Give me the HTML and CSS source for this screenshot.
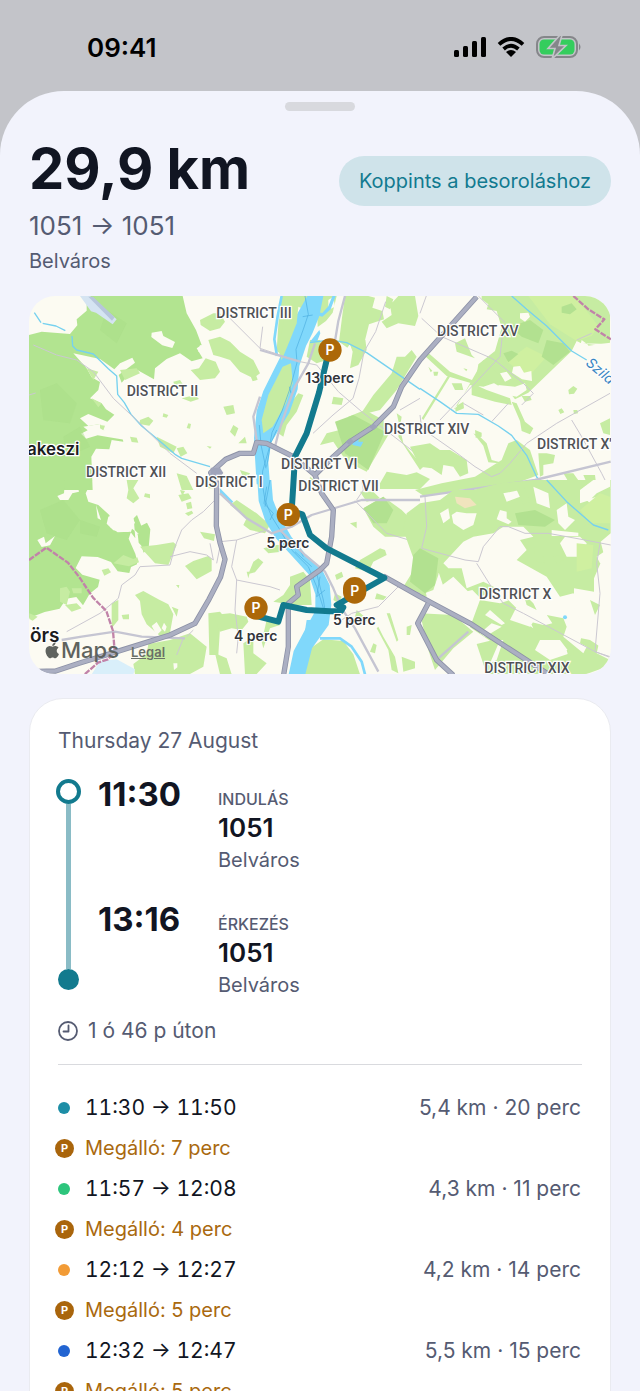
FILE: index.html
```html
<!DOCTYPE html>
<html lang="hu">
<head>
  <meta charset="UTF-8" />
  <meta name="viewport" content="width=device-width, initial-scale=1" />
  <title>29,9 km</title>
  <link rel="stylesheet" href="styles.css">
</head>
<body>

<div class="status-bar">
  <span class="clock">09:41</span>
  <div class="status-icons">
    <svg width="32" height="20" viewBox="0 0 32 20" aria-hidden="true">
      <rect x="0" y="13" width="5" height="7" rx="1.500" />
      <rect x="9" y="9" width="5" height="11" rx="1.500" />
      <rect x="18" y="4" width="5" height="16" rx="1.500" />
      <rect x="27" y="0" width="5" height="20" rx="1.500" />
    </svg>
    <svg width="28" height="20" viewBox="0 0 28 20" aria-hidden="true">
      <path d="M2 7.4Q14-3.6 26 7.4M6.6 12Q14 5.4 21.4 12" fill="none" stroke="#000" stroke-width="3.8" />
      <path d="M14 20l-5-5q5-4 10 0z" />
    </svg>
    <svg width="46" height="22" viewBox="0 0 46 22" aria-hidden="true">
      <rect x="1" y="1" width="40" height="20" rx="7" fill="none" stroke="#85868a" stroke-width="2" />
      <path d="M43 7.5q3 3.500 0 7z" fill="#85868a" />
      <rect x="3.500" y="3.500" width="35" height="15" rx="4.500" fill="#35cd5d" />
      <path d="M24-1L12 12.500h7L16 23 30 9.500h-7L26-1z" fill="#85868a" stroke="#c3c4c9" stroke-width="1.600" />
    </svg>
  </div>
</div>

<main class="sheet">
  <div class="grabber"></div>

  <header class="trip-header">
    <div>
      <h1>29,9 km</h1>
      <p class="route">1051 → 1051</p>
      <p class="area">Belváros</p>
    </div>
    <button class="classify" type="button">Koppints a besoroláshoz</button>
  </header>

  <div class="map">
    <svg class="map-art" viewBox="0 0 1746 1134" role="img" aria-label="Budapest">
      <!-- north west: Buda hills -->
      <g transform="translate(-27 -18)">
        <path class="forest" d="M200 18H488L500 70 528 120 545 165 530 175 548 205 515 214 480 190 440 207 405 235 402 268 352 240 330 250 305 278 296 255 345 218 337 203 300 220 283 238 240 207 160 190 200 235 215 262 240 276 235 300 210 325 245 340 258 358 283 374 262 395 205 372 180 385 205 408 240 402 255 425 305 432 310 455 275 450 268 478 228 476 214 500 218 600H27V135L65 125 150 132 172 106 170 88 200 62z" />
        <path class="land" d="M395 128l30-5 5 15 35 18-8 18-30-8-33-25zM540 165l12 5-5 18-12-3z" />
        <path class="land" d="M190 410l50-8 15 20 50 5 8 22-50-8-30-5-35 10-15-15 20-10z" />
        <path class="forest-dark" d="M60 300l50-20 60 60-20 60-80-10zM130 440l50-30 30 60-70 30zM260 60l60 40-30 60-50-40z" />
        <path class="park" d="M540 90l40-20h20l15 25-15 20-30 8-28-18zM565 150l35-10 20 40-20 20-20-5zM512 240l25-5 20-30 30 10 13 30-15 20-45 5zM300 240l50-5 10 15-45 20zM200 235l35 10-15 25zM360 390l25-10 15 12-12 15-30-5zM410 440l60 30-10 20-40-20zM470 475l20-5 12 20-20 10zM330 440l20 3 5 15-20-2zM485 325l40-10 12 12-25 8zM505 400l8 2-3 14-10-2zM430 370l15 5-5 8-12-3zM240 405l15 2-5 14-10-6zM215 325l30 15-10 12zM470 550l30 8 20 42h-35zM460 275l20-5 8 12-25 3zM560 468l15 2-5 6z" />
        <path class="airfield" d="M180 18h30l80 70-12 15-50-35-15-4z" />
        <path class="airfield-dark" d="M205 20h14l65 62-8 10z" />
        <path class="stream" d="M43 68l20 30M68 100l40 8 28 14M156 138l2 30 12 12 50 12 45 44 25 22 3 55 20 25 20 35 32 35 60 50 40 35 20 12 85 25" />
        <path class="lane" d="M40 165l70 30 60 15 50 35 60 80 80 75 90 90 80 60" />
        <path class="lane" d="M27 315l20-6" />
      </g>

      <!-- north: Danube banks, Zugló -->
      <g transform="translate(573 -18)">
        <path class="park" d="M185 18h80l-15 55-35 60-15 70-30-20 5-80zM290 18l60 0-12 50-20 25-25 18zM0 140l30 15 30 30 40 25 20 40-20 15-40-20-30-35-30-10zM375 18h70l20 5-8 30 30 10 5 25-45 15-15 60-35-10-15 20-25-18 10-80zM535 18h50l10 60-10 30-50-8-35 15-15-20 30-20-5-30zM385 150l50-10 5 40-25 45-25 10 8-50zM515 250l15-50 25 0 20-20 15 20-30 50-30 50-50 60-60 15 40-60zM270 150h30l20 60-30 10-30-20zM195 360l40-50 15 5-20 50-30 40-10 35-15-10zM90 255l15-8 8 22-15 5zM10 350l30-5 5 25-25 5zM340 320l30 5-5 20-30-3zM40 405l15 10-10 25-15-15zM55 460l20-20 5 20zM500 18l20 10-10 30-15-8zM385 380l50-20 55 30 15 45-65 110-60-30-40-60-40 10 20-35 60-15zM480 580l20-35 60 10 30-8 40 20-30 30H480zM530 370l15 10-10 60 65 100 10-10-60-70zM270 560l12 10-15 20zM60 540l30 10-15 25z" />
        <path class="park-dark" d="M345 395l55-20 95 50-50 115-70-50z" />
        <path class="land" d="M215 90l20-40 10 5-15 50zM325 30l15-10 5 30-20 10z" />
        <path class="water" d="M262 18h48l-12 60-20 50-20 40-20 60-5 70-25 70-55 90-8 60 5 65h-40l-5-80-3-60 8-80 20-60 40-80 30-60 25-80z" />
        <path class="park" d="M188 230l25-10 5 60-20 60-40 70-28 20-5-40 20-75z" />
        <path class="park" d="M195 80l40-30-5 50-20 50-25 60-10-30z" />
        <path class="water" d="M347 18l-15 40-25 22-30-8 2-8 28 5 18-20 12-31zM270 155l28-35 3 10-10 25z" />
        <path class="water-line" d="M185 18l-12 60-10 70 8 50" />
        <path class="depth" d="M255 18l10 55-15 45-22 60 3 40-20 75-25 70-30 65-8 45-20 70-3 55M248 80l30-5M208 290l5 20M118 405l5 60 15 70M170 420l-18 40-12 70" />
        <path class="stream" d="M270 158l60-8 50 8 60 30 160 110" />
        <path class="water" d="M400 440l20-5-5 20 15 0-8 15-25-5z" />
        <path class="lane" d="M497 35l-30 90-35 60-15 80-18 60-60 50-60 55M30 85l90 90 60 20 60 20 50 10 65 80 70 60 175 135M120 175l8-65M540 360l60-35" />
        <path class="street" d="M375 18l-20 75-10 60M285 160l-20 60-40 70-30 80-20 60-10 40M120 180l120 35M120 320l-20 60 10 70" />
      </g>

      <!-- north east -->
      <g transform="translate(1173 -18)">
        <path class="park" d="M185 18h385v140l-70 10-30-15-15 30-130 125-40 20-15-20-50-30-55 5 10-60 50-40 20-70-15-50-30-5 5-15-20-15z" />
        <path class="park-light" d="M325 18h140l70 90-20 30-45 15-80-50zM260 215l60-45 60 30-55 60z" />
        <path class="park-dark" d="M270 110l60-20 40 30-15 40-50-20zM380 150l50 10 20 25-50 40-35-25zM250 190l25-8 20 10-30 25zM425 50l30-10 15 18-20 15-25-5z" />
        <path class="land" d="M195 255l20 0 5 25-20 10-12-12zM240 250l20-5 15 20-20 10zM280 230l20-2 12 20 22-5 2 30-30-5-30-20zM235 285l50 5 30-10 5 20-30 20-50-10zM300 70l25-2 5 12-15 15-15-10zM485 150l20 15-5 20-20-15zM485 160l85 10v-8z" />
        <path class="park" d="M110 350l80-140 60 60-60 20-40-5-50 75zM105 160l30-15 20 50 10 10-55-20zM155 280l45 20 70 25 5 20-50-10-70-20zM275 335l15 5 25 55 25 20-10 18-25-10-5-30zM15 180l75 65 80 30-5 8-85-25-65-60zM85 255l5 5-80 130-5-5zM265 460l25-10 40 30 25 75-80 30-160 15-100 20-30-20 80-20 100-20 80-50zM-30 470l60-10 30 20 30 0 50 30 5 40-25 10-20-30-30-5-5 30-30-20-35-5zM355 490l25 0 25 5-5 25-30 5 0 30-10 5zM430 550l30 0 25 35 15 15h-40zM490 555l35 0 5 40-25-5zM540 400l30-15v50l-20-5zM445 300l15-12 12 8-10 15-15 2zM415 360l10-5 8 12-12 5zM460 360l12 0 2 10-12 2zM40 245l15 0-3 12-10 0zM95 280l30 0 5 20-25 0zM165 420l20 8 0 12-18 3zM160 430l20 10 20 20 15 50 45 12-55-5-15-50zM305 318l25 0 5 12-20 5zM105 350l25-15 2 20-25 10zM25 230l12 12-5 5zM130 235l12 3-3 6z" />
        <path class="stream" d="M275 18l45 40 60 50 75 75 45 27M0 295l60 40 50 35 65 3 60 35 40 28 45 60 30 65 45 50" />
        <path class="lane" d="M0 70l20-55M5 85l60 55 150 65 15 10 80 65 30 30-35 35M265 340l-50 55M175 18l80 80M250 110l-10 90-80 85-100 105M570 310l-160 90-90 60-50 60-30 30-25 10-50-30-60-45-100-70-5-40M455 390l30 50 60 110 25 50M470 150l45-20M130 340l60 35" />
        <path class="street" d="M0 620l345-50 227-55" />
        <path class="border-line" d="M460 18l45 40 48 30-27 30 47 30" />
      </g>

      <!-- south west -->
      <g transform="translate(-27 552)">
        <path class="forest" d="M27 0H135l-3 40-20 8 8 12h25l12-20 20-5-5-20h18l15-15h12L197 40l8 25 30 10 33 30 8 22-5 15 22 15 38-2 15 20-5-60 10-10 20 50 0 8 20 45 5 25-40-45-5-45 30-15 10 20-5 55-15 15-20-60-15-12-10 30 20 45 5 20 0 12-18 8-5 18-35-5-20-28-40-15-48-2-18 35 20 20 52 15-5 22-25 20-20 35-20-25-30 5-20 30-45 10-65 25z" />
        <path class="land" d="M52 180l20-10 5 20 28-22-15 28-25 5zM228 75l15 45-10-5zM265 110l35-15 30 5 15 28-20 28-45-5-20-20zM342 148l15 15-10-3z" />
        <path class="forest-dark" d="M60 90l70-30 50 60-40 60-60-20zM180 120l60 20-10 30-50-10z" />
        <path class="park" d="M320 0h35l-15 25 18 30-18 15-20-15 5-25zM375 40l15 3 0 12-18-5zM360 200l50-5 50-8 10 8-25 60-40-5zM245 270l20-5 8 12-20 10zM280 250l30-25 30 12 12-5 5 15-30 12zM495 258l25-15 45-15 10 10 0 35-45 25zM345 345l25-12 45 25 30 15 15 30-10 55-30 10-40-35-15-30-5-40zM120 325l20-5 10 15-10 40-20-10zM135 375l35-5 15 15-30 10zM28 400l25 10-15 12-10-5zM155 325l30 0 0 15-25 0zM275 370l20-10v60l-20 25zM305 405l22-2 0 15-18 0zM450 480l60-20 50 40-10 60-40 22H345l-5-30 40-30 5-30zM475 45l30-5 10 15-30 10zM540 155l45 8-3 20-30-8zM498 70l15-5 4 20-15 3zM495 100l20-8 5 8-15 8zM480 30l15 3-8 15zM565 400l35-5 25 30-25 20-5 80-27 0zM455 380l20 8-5 22zM468 315l10 0-2 10zM555 5h40v20h-30z" />
        <path class="land" d="M395 438l15-12 15 25-15 15zM432 428l8 12-5 15-10-10zM460 550l12 0 0 12-10 8z" />
        <path class="pond" d="M215 583l25-40 50-5 55 30-5 15z" />
        <path class="lane" d="M595 50l-45 45-35 25-30 30-20 50-15 55-90 5-15 25-40 30-10 40-55 45-100 55M450 230l60-15 50 10 20 15-10-50M490 475l-20 50M500 470l20-20" />
        <path class="street" d="M125 480l60-10 100-15 80 15 130 5" />
        <path class="border-line" d="M27 240l52-37 65 45 35 45 40 60 40 40 20 60 5 60-20 25-30 10-40 35" />
      </g>

      <!-- south: river and Csepel -->
      <g transform="translate(573 552)">
        <path class="park" d="M30 75l20-15 60 40 40 35-15 25-45-10-20-15 10-20zM130 205l40-10 25 0-10 20-40 5zM100 245l15-10 15 12-25 30-20 5zM80 275l10 0-5 20zM210 290l40-15 20 25 5 75-55 0-60-10 30-20 20-30zM-20 405l50-5 50 10 5 15-20 25-30-5-35 10zM70 490l30-20 0 50 40 30-30 32H75zM140 420l30-5 10 20-30 10-20 60-5-20zM-15 520l35 15 15 48H0zM430 85l60-35 55 40 30 30-10 50-70 0-35-30zM455 220l25-15 15 5 5 15-40 20-15 30-40-10 15-25zM550 320l50-80 20 110h-20zM390 130l20-5 0 20zM345 285l20-10 5 15-20 10zM470 340l30 10-10 10-25-3zM410 390l35 30-35 10-5-20zM230 583l30-70 50-35 60 5 30 40 20 60zM475 440l15 30 35 60 10 50-20-10-10-60-35-65zM500 400l10 0 25 80-5 5zM545 530l40 15v20l-35 10zM560 440l15-5-5 30-10 0zM420 35l40 0 20 20-40 10zM345 340l20 10-10 20-15-10zM460 490l10 5-5 25-15-5z" />
        <path class="park-dark" d="M430 85l60-35 30 40-20 40-40 0z" />
        <path class="water" d="M112 0h42l5 60 20 50 35 60 40 50 50 45 25 50 5 60-8 60-50 70-20 78h-50l15-70 40-75 25-45 0-50-20-60-50-55-50-55-30-50-20-60z" />
        <path class="water" d="M260 420l22 0-20 60-10-10zM0 25l40 40-5 5-35-30z" />
        <path class="water-line" d="M300 475l60 0 35 25 30 45 10 38" />
        <path class="depth" d="M125 0l10 60 20 50 25 40 35 60 50 50 25 60 25 80M140 20l-8 50 28 30-10 20M150 0l-15 80M225 215l50 45M290 280l20 80 5 30M300 290l-10 60 25-20M235 200l15 30" />
        <path class="lane" d="M600 190l-100-30-95-98M0 185l50-5 85-28M50 180l-15 80 15 40-5 90 10 80-5 50M50 300l100 20 30 10M600 340l-65-20-60 60-80 20-30 20M425 0l5 30-20 30M0 200l-10 50" />
        <path class="street" d="M0 40l80 75 75 45 60-20 60-35 100-30 50-15h175M180 150l75 75 60 50 25 50 25 60 40 60 70 130" />
      </g>

      <!-- south east -->
      <g transform="translate(1173 552)">
        <path class="park" d="M-50 150l10-50 40-30 60-10 40-30 60 0 80-20 100-10h232v160l-30 25 10 40-30 70 0 40-60-10 0 40-40 10 15 40 20 60-20 30-40-10-50-25 10-30 40-10-20-30-100-20-20-30-20-20-60 20-20-20-40 10 10 20-50-20-20-60-45-10-30-30z" />
        <path class="park" d="M0 200l60 35-5 50-15 45-40 15zM0 400l100 5 60 50-60 50-55 65-20-60zM180 360l60 10 30-10 80 60 60 40 100 20 60 40-10 40-60 22H200l-30-90 40-10-60-40z" />
        <path class="park-dark" d="M-20 225l20-20 55 30-10 80-30 25-45-35zM285 100l60-10 60 30-30 20-80-5z" />
        <path class="land" d="M140 100l30 0-10 35-30 15-30-20-5-25 15-10zM225 210l30 0-5 18-45 12-3-10zM130 185l30-15 60-10 30-20 60 0 30 30-40 10 20 30-30 30 90 50 40 60 40-10 30 30-30 10 30 60-10 50 20 10-10 20-60-50 10-30-10-25-50-10-10 30-40-10 10 20-60-40 10-20-60-60-40-20-50 20-15-60-40 0-15-15zM250 40l50-10 0 20-40 15zM240 90l20 5 0 20 15 10-10 8-35-15zM410 90l30-20 5 40 20 10-30 30-20-20zM480 30l40-30h50v20l-40 20-20 20-30 10zM340 20l45 20 5 45-40-15zM60 100l25-15 5 30-20 15zM480 170l20 20-10 40-50 0-20-40 15-20zM395 150l80 8 0 10-80 0zM550 430l20-40 0 150-40-20zM290 380l60 30-20 30-60-20zM360 480l60 0 30 40-60 20-45-30zM240 480l10 0-20 60-20 10zM195 405l15-15 45 40-10 5zM180 460l35-30 30 10-50 30zM530 230l45-30v50l-35 0zM500 60l30-10-10 30zM60 320l40-30 60 60-20 40-50-30z" />
        <path class="park-light" d="M480 90l60-50 30 10v80l-60 0zM470 190l50 5-5 70-45 10z" />
        <path class="park" d="M290 30l20-15 20 50-20 8zM340 200l30 30 5 20-25-5zM400 230l20-5 10 15-20 10zM510 360l30 15-15 30zM440 510l20 0 0 15-15 5zM310 340l30 30 10 20-30-15z" />
        <path class="sand" d="M105 50l45 5 20 20-35 10-25-15z" />
        <circle class="water" cx="435" cy="412" r="6" />
        <path class="stream" d="M380 0l60 65 80 70 45 15" />
        <path class="lane" d="M15 50l5 90-15 65 130 35 40 5 15-45 50-60h25l50 20 70 0 110 20 77 15M170 250l50 80 30 40 60 30 215 115 45 15M540 190l-10 60 10 90-15 175M590 540l-65-25" />
        <path class="street" d="M145 455l-90 80" />
      </g>

      <!-- ring road and motorways, dark casing first -->
      <g class="highway-edge">
        <path id="r1" d="M0 1127l80-2 70-23 113-35 160-50 75-35 42-72 35-68 13-52-15-50-11-50 1-130-18-30 45-40 43-18 40 0 10-33 30 3 80 40 65 55 55-55 50-45 70-45 60-60 25-60 55-80 170-190" />
        <path id="r2" d="M858 537l20 55 35 50-5 80-15 80-20 20-70 50 5 25-30 25 0 130-15 90" />
        <path id="r3" d="M1063 840l110 62 150 80 240 156M1198 922l-32 60 57 110 50 46" />
      </g>
      <g class="highway">
        <use href="#r1" /><use href="#r2" /><use href="#r3" />
      </g>
      <path class="interchange" d="M545 515h28l10 16-10 12h-28zM950 437l13-10 13 10-13 12zM1020 392l13-9 13 9-13 10z" />

      <g class="district">
        <text x="562" y="67">DISTRICT III</text>
        <text x="1224" y="121">DISTRICT XV</text>
        <text x="293" y="301">DISTRICT II</text>
        <text x="1065" y="415">DISTRICT XIV</text>
        <text x="1524" y="458">DISTRICT X'</text>
        <text x="171" y="543">DISTRICT XII</text>
        <text x="499" y="572">DISTRICT I</text>
      </g>

      <path class="track" d="M896 180L870 290 833 412 798 482 792 582 788 645 820 655 843 717 893 757 1066 846 923 927 943 934 936 946 903 946 833 942 763 927 748 977 683 960" />

      <g class="district">
        <text x="756" y="520">DISTRICT VI</text>
        <text x="808" y="585">DISTRICT VII</text>
        <text x="1350" y="908">DISTRICT X</text>
        <text x="1366" y="1130">DISTRICT XIX</text>
      </g>
      <text class="town" x="-6" y="476">akeszi</text>
      <text class="town near" x="3" y="1037">örs</text>
      <text class="stream-name" transform="translate(1668 205) rotate(40)">Szila</text>

      <g class="pin">
        <circle cx="903" cy="162" r="35" />
        <circle cx="778" cy="656" r="35" />
        <circle cx="977" cy="878" r="35" />
        <circle cx="977" cy="888" r="35" />
        <circle cx="681" cy="936" r="35" />
        <text x="903" y="177">P</text>
        <text x="778" y="671">P</text>
        <text x="977" y="901">P</text>
        <text x="681" y="951">P</text>
      </g>
      <g class="stop-label">
        <text x="902" y="262">13 perc</text>
        <text x="777" y="757">5 perc</text>
        <text x="976" y="988">5 perc</text>
        <text x="680" y="1036">4 perc</text>
      </g>

      <path class="apple" transform="translate(38 1031) scale(2.65)" d="M17.05 20.28c-.98.95-2.050.8-3.080.35-1.090-.46-2.090-.48-3.240 0-1.440.62-2.200.44-3.060-.35C2.790 15.250 3.510 7.590 9.050 7.310c1.350.07 2.290.74 3.080.8 1.180-.24 2.310-.93 3.570-.84 1.510.12 2.650.72 3.400 1.800-3.120 1.870-2.380 5.980.48 7.130-.57 1.500-1.310 2.990-2.540 4.090zM12.030 7.250c-.15-2.230 1.660-4.070 3.740-4.250.29 2.580-2.340 4.500-3.740 4.250z" />
      <text class="maps" x="96" y="1087">Maps</text>
    </svg>
    <a class="legal" href="#">Legal</a>
  </div>

  <section class="card">
    <p class="date">Thursday 27 August</p>

    <div class="timeline">
      <div class="rail">
        <span class="ring"></span>
        <span class="line"></span>
        <span class="end"></span>
      </div>
      <div class="ends">
        <div class="leg">
          <time>11:30</time>
          <div class="place">
            <span class="label">INDULÁS</span>
            <strong>1051</strong>
            <span class="muted">Belváros</span>
          </div>
        </div>
        <div class="leg">
          <time>13:16</time>
          <div class="place">
            <span class="label">ÉRKEZÉS</span>
            <strong>1051</strong>
            <span class="muted">Belváros</span>
          </div>
        </div>
      </div>
    </div>

    <p class="duration">
      <svg width="20" height="20" viewBox="0 0 20 20" fill="none" stroke="currentColor" stroke-width="1.800" stroke-linecap="round" stroke-linejoin="round" aria-hidden="true">
        <circle cx="10" cy="10" r="9" />
        <path d="M10.500 4.500v6H5.500" />
      </svg>
      1 ó 46 p úton
    </p>

    <hr>

    <ul class="segments">
      <li class="drive"><span class="dot teal"></span><span class="hours">11:30 → 11:50</span><span class="stats">5,4 km · 20 perc</span></li>
      <li class="stop"><span class="badge">P</span>Megálló: 7 perc</li>
      <li class="drive"><span class="dot green"></span><span class="hours">11:57 → 12:08</span><span class="stats">4,3 km · 11 perc</span></li>
      <li class="stop"><span class="badge">P</span>Megálló: 4 perc</li>
      <li class="drive"><span class="dot orange"></span><span class="hours">12:12 → 12:27</span><span class="stats">4,2 km · 14 perc</span></li>
      <li class="stop"><span class="badge">P</span>Megálló: 5 perc</li>
      <li class="drive"><span class="dot blue"></span><span class="hours">12:32 → 12:47</span><span class="stats">5,5 km · 15 perc</span></li>
      <li class="stop"><span class="badge">P</span>Megálló: 5 perc</li>
    </ul>
  </section>
</main>

</body>
</html>
```

FILE: styles.css
```css
* {
  box-sizing: border-box;
}

body {
  margin: 0;
  height: 100vh;
  display: flex;
  flex-direction: column;
  background: #c3c4c9;
  color: #111522;
  font-family: Inter, "Liberation Sans", sans-serif;
  font-size: 21px;
}

h1,
p,
ul {
  margin: 0;
  padding: 0;
}

/* status bar */
.status-bar {
  display: flex;
  justify-content: space-between;
  align-items: center;
  flex: none;
  height: 91px;
  padding: 3px 58px 0 87px;
  color: #000;
}

.clock {
  font-size: 26px;
  font-weight: 600;
}

.status-icons {
  display: flex;
  align-items: center;
  gap: 11px;
}

/* sheet */
.sheet {
  flex: 1;
  min-height: 0;
  overflow-y: auto;
  scrollbar-width: none;
  padding: 11px 29px 0;
  background: #f2f3fc;
  border-radius: 64px 64px 0 0;
}

.grabber {
  width: 70px;
  height: 9px;
  margin: 0 auto;
  border-radius: 5px;
  background: #d8d9de;
}

.trip-header {
  display: flex;
  justify-content: space-between;
  align-items: flex-start;
  margin: 22px 0 21px;
}

h1 {
  font-size: 56px;
  line-height: 72px;
  font-weight: 700;
}

.route {
  margin-top: 4px;
  font-size: 26px;
  line-height: 34px;
  color: #555b72;
}

.area {
  margin-top: 4px;
  font-size: 20px;
  line-height: 28px;
  color: #555b72;
}

.classify {
  height: 50px;
  margin-top: 23px;
  padding: 0 20px;
  border: none;
  border-radius: 25px;
  background: #cfe3ea;
  color: #127a90;
  font: inherit;
  font-size: 20px;
  cursor: pointer;
}

/* map */
.map {
  position: relative;
  overflow: hidden;
  border-radius: 26px;
  background: #fcfbf2;
}

.map-art {
  display: block;
  width: 100%;
  height: auto;
}

.forest { fill: #b2e490; }
.forest-dark { fill: #a9de88; opacity: 0.5; }
.park { fill: #c6eca2; }
.park-dark { fill: #b2e190; }
.park-light { fill: #cff0a0; }
.land { fill: #fcfbf2; }
.sand { fill: #f0e4bd; }
.water { fill: #80d8fb; }
.pond { fill: #d9effa; }
.airfield { fill: #d5e4f2; }
.airfield-dark { fill: #b7c6dc; }

.stream,
.lane,
.street,
.depth,
.water-line,
.border-line,
.highway,
.highway-edge,
.track {
  fill: none;
  stroke-linejoin: round;
}

.stream { stroke: #76d1ef; stroke-width: 4; }
.water-line { stroke: #80d8fb; stroke-width: 8; }
.depth { stroke: #4baee0; stroke-width: 2; }
.lane { stroke: #cbc8d1; stroke-width: 3; }
.street { stroke: #c5c5d2; stroke-width: 7; }
.border-line { stroke: #c183a9; stroke-width: 7; stroke-dasharray: 18 4; }
.highway-edge { stroke: #8d92a7; stroke-width: 16; }
.highway { stroke: #abafc2; stroke-width: 11; }
.interchange { fill: #9fa4ba; }
.track { stroke: #127a8e; stroke-width: 18; }

/* the roads are reused, so the edge width has to come from the group */
.highway use,
.highway-edge path {
  fill: none;
}

.district {
  font-family: Roboto, sans-serif;
  font-size: 42px;
  font-weight: 500;
  fill: #4f5155;
  stroke: #fff;
  stroke-width: 7;
  paint-order: stroke;
}

.town {
  font-size: 51px;
  font-weight: 600;
  fill: #1b1c1e;
  stroke: #fff;
  stroke-width: 7;
  paint-order: stroke;
}

.near {
  font-size: 57px;
}

.stream-name {
  font-size: 42px;
  font-style: italic;
  fill: #3a86c2;
  stroke: #fff;
  stroke-width: 5;
  paint-order: stroke;
}

.pin circle { fill: #ac6809; }

.pin text {
  font-size: 42px;
  font-weight: 600;
  fill: #fff;
  text-anchor: middle;
}

.stop-label {
  font-size: 42px;
  font-weight: 600;
  fill: #333539;
  stroke: #fff;
  stroke-width: 6;
  paint-order: stroke;
  text-anchor: middle;
}

.apple,
.maps {
  fill: #5f635e;
}

.maps {
  font-size: 66px;
  font-weight: 500;
}

.legal {
  position: absolute;
  left: 102px;
  bottom: 13px;
  color: #6a7067;
  font-size: 13px;
  line-height: 18px;
  font-weight: 600;
}

/* details card */
.card {
  margin-top: 24px;
  padding: 27px 25px;
  border: 1px solid #eaebf0;
  border-radius: 34px;
  background: #fff;
}

.date {
  padding-left: 3px;
  line-height: 30px;
  color: #555b72;
}

.timeline {
  display: flex;
  margin-top: 18px;
}

.rail {
  display: flex;
  flex-direction: column;
  align-items: center;
  width: 26px;
  padding: 5px 0 10px;
}

.ring {
  width: 25px;
  height: 25px;
  border: 4px solid #127a8e;
  border-radius: 50%;
}

.line {
  flex: 1;
  width: 5px;
  background: #8abcc6;
}

.end {
  width: 21px;
  height: 21px;
  border-radius: 50%;
  background: #127a8e;
}

.ends {
  display: flex;
  flex-direction: column;
  gap: 24px;
  padding-left: 17px;
}

.leg {
  display: flex;
}

.leg time {
  width: 120px;
  font-size: 33px;
  line-height: 40px;
  font-weight: 700;
}

.place {
  display: flex;
  flex-direction: column;
  padding-top: 13px;
}

.label {
  font-size: 16px;
  line-height: 24px;
  font-weight: 500;
  color: #555b72;
}

.place strong {
  font-size: 26px;
  line-height: 34px;
  font-weight: 600;
}

.muted {
  font-size: 20px;
  line-height: 30px;
  color: #555b72;
}

.duration {
  display: flex;
  align-items: center;
  gap: 10px;
  margin-top: 16px;
  padding-left: 3px;
  line-height: 30px;
  color: #555b72;
}

hr {
  height: 1px;
  margin: 18px 3px 22px;
  border: none;
  background: #d9dade;
}

.segments {
  list-style: none;
}

.drive,
.stop {
  display: flex;
  align-items: center;
  gap: 11px;
}

.drive {
  height: 41px;
  padding-right: 4px;
}

.stop {
  height: 40px;
  font-size: 20px;
  color: #a9690f;
}

.dot {
  width: 12px;
  height: 12px;
  margin: 0 4px 0 3px;
  border-radius: 50%;
}

.teal { background: #1d8ea6; }
.green { background: #2dc57c; }
.orange { background: #f29b36; }
.blue { background: #2264d1; }

.badge {
  width: 19px;
  height: 19px;
  border-radius: 50%;
  background: #a9650c;
  color: #fff;
  font-size: 11px;
  line-height: 19px;
  font-weight: 700;
  text-align: center;
}

.hours {
  font-variant-numeric: tabular-nums;
}

.stats {
  margin-left: auto;
  color: #555b72;
}
```
